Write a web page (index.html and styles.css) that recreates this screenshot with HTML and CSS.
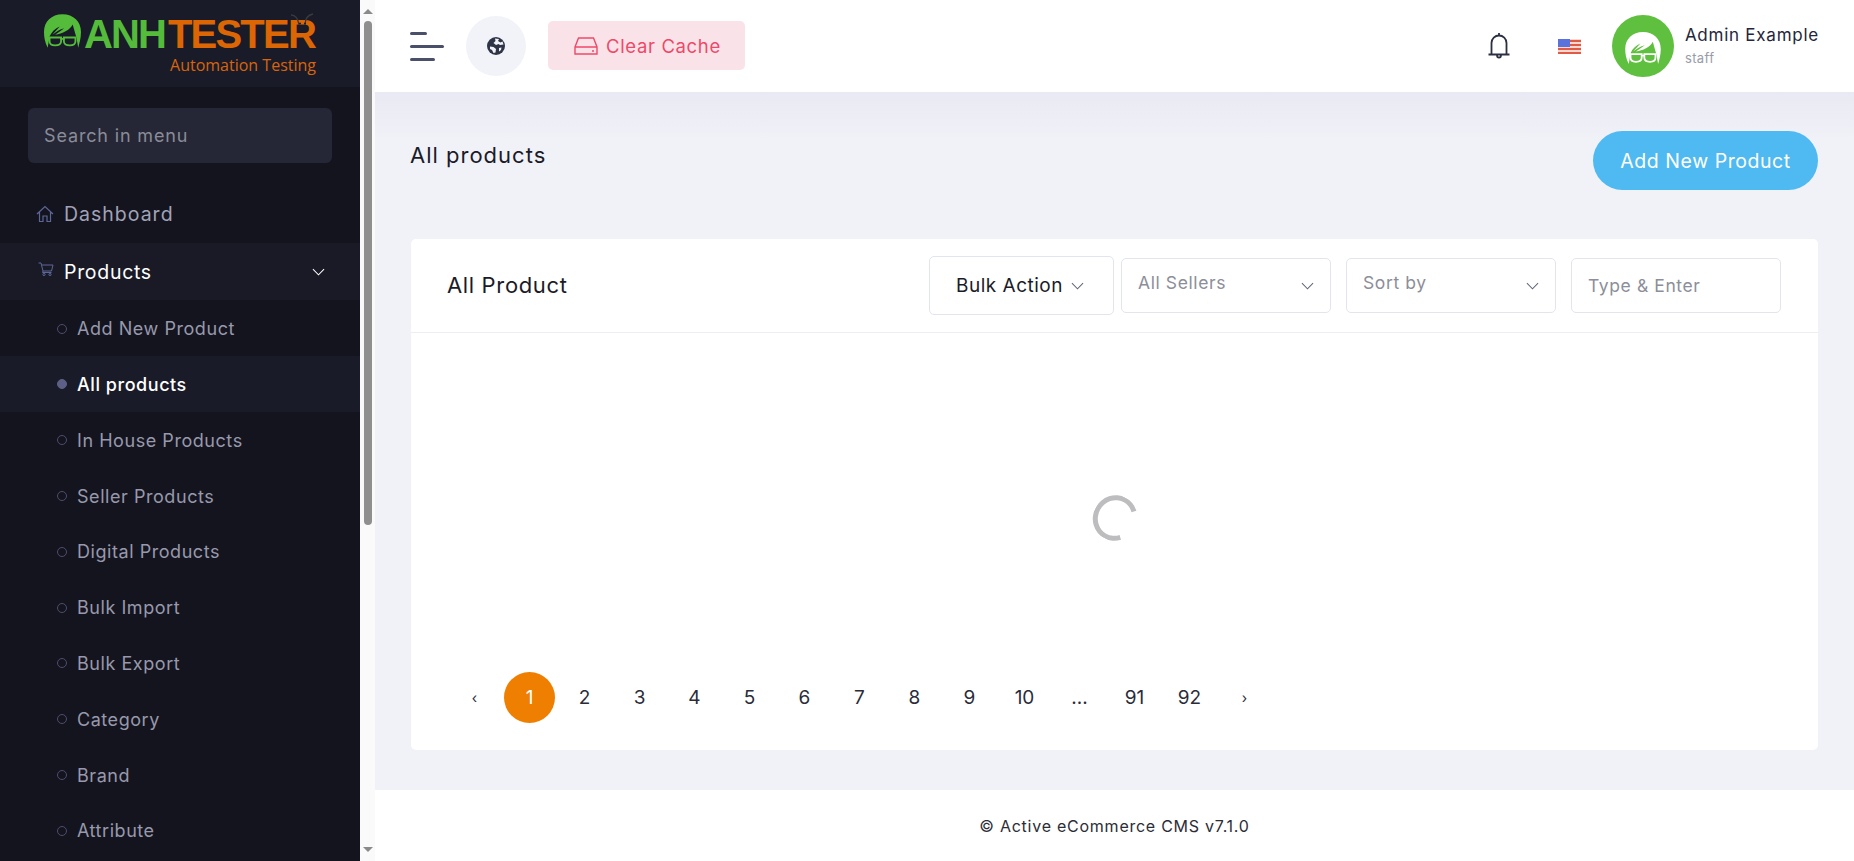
FILE: index.html
```html
<!DOCTYPE html>
<html lang="en">
<head>
    <meta charset="UTF-8">
    <title>All products</title>
    <link rel="stylesheet" href="styles.css">
</head>
<body>
    <svg class="defs" width="0" height="0">
        <symbol id="head" viewBox="0 0 40 36">
            <path fill="currentColor" d="M20 0C32 0 40 8 40 19C40 26 38 32 37 36L35 25L31 11C28 17 20 21 12 22L22 15C17 16 13 19 9 22L17 13C12 15 8 19 6 24L4 36C1 30 0 25 0 19C0 8 8 0 20 0Z"/>
            <g fill="none" stroke="currentColor" stroke-width="2">
                <path d="M6 25H18.500V29C18.500 32 16.500 33.500 12 33.500C8 33.500 6 32 6 29Z"/>
                <path d="M21.500 25H34V29C34 32 32 33.500 28 33.500C23.500 33.500 21.500 32 21.500 29Z"/>
                <path d="M18 26.500H22"/>
            </g>
        </symbol>
        <symbol id="chev" viewBox="0 0 14 8">
            <path fill="none" stroke="currentColor" stroke-width="1.1" d="M1 1L7 7L13 1"/>
        </symbol>
    </svg>

    <div class="app">
        <aside class="sidebar">
            <div class="side-inner">
                <div class="logo">
                    <svg class="logo-head"><use href="#head"/></svg>
                    <div class="logo-words">
                        <div class="logo-name"><span class="anh">ANH</span><span class="tester">TESTER</span></div>
                        <div class="logo-sub">Automation Testing</div>
                    </div>
                    <svg class="logo-bug" viewBox="0 0 24 14">
                        <path fill="none" stroke="#3a3a3f" stroke-width="1.3" d="M9 13C8 6 5 3 1 3M15 13C15 6 18 3 23 2"/>
                        <circle cx="10" cy="11.500" r="1" fill="#1a1b28"/>
                        <circle cx="15" cy="11.500" r="1" fill="#1a1b28"/>
                    </svg>
                </div>
                <div class="search-wrap">
                    <div class="search">Search in menu</div>
                </div>
                <nav class="menu">
                    <a class="menu-item">
                        <svg class="menu-icon" viewBox="0 0 18 18"><path fill="none" stroke="#5d6796" stroke-width="1.2" d="M1 9L9 1.500L17 9M3.500 7V16.500H7V11H11V16.500H14.500V7"/></svg>
                        Dashboard
                    </a>
                    <a class="menu-item open">
                        <svg class="menu-icon cart" viewBox="0 0 16 14"><path fill="none" stroke="#5d6796" stroke-width="1" d="M0.500 1H3L5 9H13.500L15 3H3.500M5 9L4.500 10.500H13.500"/><circle cx="6" cy="12.500" r="1.100" fill="none" stroke="#5d6796"/><circle cx="12" cy="12.500" r="1.100" fill="none" stroke="#5d6796"/></svg>
                        Products
                        <svg class="menu-chev"><use href="#chev"/></svg>
                    </a>
                    <a class="sub-item">Add New Product</a>
                    <a class="sub-item active">All products</a>
                    <a class="sub-item">In House Products</a>
                    <a class="sub-item">Seller Products</a>
                    <a class="sub-item">Digital Products</a>
                    <a class="sub-item">Bulk Import</a>
                    <a class="sub-item">Bulk Export</a>
                    <a class="sub-item">Category</a>
                    <a class="sub-item">Brand</a>
                    <a class="sub-item">Attribute</a>
                </nav>
            </div>
            <div class="side-scroll">
                <span class="arrow-up"></span>
                <span class="thumb"></span>
                <span class="arrow-down"></span>
            </div>
        </aside>

        <div class="main">
            <header class="topbar">
                <div class="burger"><span class="b1"></span><span class="b2"></span><span class="b3"></span></div>
                <div class="globe">
                    <svg viewBox="0 0 18 18" width="18" height="18">
                        <circle cx="9" cy="9" r="9" fill="#2f3547"/>
                        <path fill="#f2f3f8" d="M8 1.500L12 2L11 4L13.500 5.500L15.500 4.500L16.500 7.500L13 8L11.500 7L9 8L6.500 6L8.500 4ZM3 9.500L6.500 10L9 12L8.500 15.500L6.500 16L5 13L3 12ZM12 11L14.500 10.500L14 13L12 14.500Z"/>
                    </svg>
                </div>
                <button class="cache-btn">
                    <svg viewBox="0 0 24 18" width="24" height="18"><path fill="none" stroke="#ef486a" stroke-width="1.400" d="M1 10L4.500 1H19.500L23 10V17H1ZM1 10H23"/><circle cx="19" cy="14" r="1" fill="#ef486a"/></svg>
                    Clear Cache
                </button>
                <div class="top-right">
                    <svg class="bell" viewBox="0 0 24 28"><path fill="none" stroke="#2b3041" stroke-width="1.800" d="M1.500 22.500H22.500M4.500 22.500V11C4.500 6.500 8 3.500 12 3.500C16 3.500 19.500 6.500 19.500 11V22.500M12 1V3.500M10 23C10 26.500 14 26.500 14 23"/></svg>
                    <svg class="flag" viewBox="0 0 23 15">
                        <rect width="23" height="15" fill="#f3d9d4"/>
                        <path d="M0 1H23V3H0ZM0 5H23V7H0ZM0 9H23V11H0ZM0 13H23V15H0Z" fill="#e05a44"/>
                        <rect width="12" height="8" fill="#5a72dc"/>
                    </svg>
                    <div class="avatar"><svg><use href="#head"/></svg></div>
                    <div class="user">
                        <div class="user-name">Admin Example</div>
                        <div class="user-role">staff</div>
                    </div>
                </div>
            </header>

            <main class="content">
                <div class="page-head">
                    <h1>All products</h1>
                    <button class="add-btn">Add New Product</button>
                </div>

                <section class="card">
                    <div class="card-head">
                        <h2>All Product</h2>
                        <div class="bulk">Bulk Action <svg class="chev"><use href="#chev"/></svg></div>
                        <div class="field select"><span>All Sellers</span><svg class="chev"><use href="#chev"/></svg></div>
                        <div class="field select"><span>Sort by</span><svg class="chev"><use href="#chev"/></svg></div>
                        <div class="field">Type &amp; Enter</div>
                    </div>
                    <div class="card-body">
                        <div class="spinner"></div>
                    </div>
                    <div class="pager">
                        <span class="page small">‹</span>
                        <span class="page current">1</span>
                        <span class="page">2</span>
                        <span class="page">3</span>
                        <span class="page">4</span>
                        <span class="page">5</span>
                        <span class="page">6</span>
                        <span class="page">7</span>
                        <span class="page">8</span>
                        <span class="page">9</span>
                        <span class="page">10</span>
                        <span class="page">...</span>
                        <span class="page">91</span>
                        <span class="page">92</span>
                        <span class="page small">›</span>
                    </div>
                </section>
            </main>

            <footer class="footer">© Active eCommerce CMS v7.1.0</footer>
        </div>
    </div>
</body>
</html>
```

FILE: styles.css
```css
* {
    box-sizing: border-box;
}
html, body {
    margin: 0;
    height: 100%;
    overflow: hidden;
}
body {
    font-family: Inter, "Noto Sans", sans-serif;
    color: #1b1b28;
    background-color: #f1f2f8;
}
.defs {
    display: block;
    height: 0;
}
.app {
    display: flex;
    height: 861px;
}

/* sidebar */
.sidebar {
    display: flex;
    width: 375px;
    flex-shrink: 0;
}
.side-inner {
    width: 360px;
    background-color: #14141f;
    overflow: hidden;
}
.side-scroll {
    width: 15px;
    background-color: #fafafa;
    display: flex;
    flex-direction: column;
    align-items: center;
    padding: 9px 0 9px;
}
.thumb {
    width: 8px;
    height: 504px;
    margin-top: 7px;
    background-color: #8f8f8f;
    border-radius: 4px;
}
.arrow-up, .arrow-down {
    width: 0;
    height: 0;
    border-left: 5px solid transparent;
    border-right: 5px solid transparent;
}
.arrow-up {
    border-bottom: 5px solid #8a8a8a;
}
.arrow-down {
    border-top: 5px solid #8a8a8a;
    margin-top: auto;
}
.logo {
    position: relative;
    height: 87px;
    background-color: #1a1b28;
    display: flex;
    padding: 14px 0 0 44px;
}
.logo-head {
    width: 37px;
    height: 34px;
    color: #54bb3b;
    margin-right: 3px;
}
.logo-words {
    width: 232px;
}
.logo-name {
    font-family: "Liberation Sans", sans-serif;
    font-size: 40px;
    font-weight: 700;
    line-height: 40px;
    white-space: nowrap;
}
.anh {
    color: #54bb3b;
    letter-spacing: -1.900px;
}
.tester {
    color: #dc6603;
    letter-spacing: -1.800px;
    margin-left: 3px;
}
.logo-sub {
    font-family: "Open Sans", sans-serif;
    font-size: 16px;
    line-height: 22px;
    color: #d7650f;
    text-align: right;
    white-space: nowrap;
}
.logo-bug {
    position: absolute;
    left: 290px;
    top: 12px;
    width: 24px;
    height: 14px;
}
.search-wrap {
    padding: 21px 28px 23px;
}
.search {
    height: 55px;
    line-height: 55px;
    padding-left: 16px;
    font-size: 18px;
    letter-spacing: 0.850px;
    color: #8a8c98;
    background-color: #252736;
    border-radius: 6px;
}
.menu-item {
    display: flex;
    align-items: center;
    height: 57px;
    padding-left: 36px;
    font-size: 19.500px;
    letter-spacing: 1px;
    color: #a2a3b7;
}
.menu-item:first-child {
    padding-bottom: 2px;
}
.menu-icon {
    width: 18px;
    height: 18px;
    margin-right: 10px;
}
.menu-icon.cart {
    width: 16px;
    height: 14px;
    margin: -5px 10px 0 2px;
}
.menu-item.open {
    color: #fff;
    background-color: #191a26;
    letter-spacing: 0.700px;
}
.menu-chev {
    width: 13px;
    height: 8px;
    margin-left: auto;
    margin-right: 35px;
    color: #fff;
}
.sub-item {
    display: flex;
    align-items: center;
    height: 55.800px;
    padding: 1.500px 0 0 57px;
    font-size: 18px;
    letter-spacing: 0.550px;
    color: #9899ac;
}
.sub-item::before {
    content: "";
    width: 8px;
    height: 8px;
    margin-right: 10px;
    border: 1.500px solid #4c4e6f;
    border-radius: 50%;
}
.sub-item.active {
    color: #fff;
    background-color: #1a1b28;
    font-weight: 500;
}
.sub-item.active::before {
    background-color: #5e5f86;
    border-color: #5e5f86;
}

/* top bar */
.main {
    flex: 1;
    min-width: 0;
    display: flex;
    flex-direction: column;
}
.topbar {
    height: 92px;
    flex-shrink: 0;
    background-color: #fff;
    display: flex;
    align-items: center;
    padding: 0 35px;
}
.burger {
    display: flex;
    flex-direction: column;
    gap: 10px;
    width: 35px;
    margin-right: 21px;
}
.burger span {
    height: 3px;
    background-color: #4a4f6a;
    border-radius: 2px;
}
.burger .b1 {
    width: 17px;
}
.burger .b2 {
    width: 34px;
}
.burger .b3 {
    width: 25px;
}
.globe {
    width: 60px;
    height: 60px;
    border-radius: 50%;
    background-color: #f2f3f8;
    display: flex;
    align-items: center;
    justify-content: center;
    margin-right: 22px;
}
.cache-btn {
    display: flex;
    align-items: center;
    gap: 8px;
    width: 197px;
    height: 49px;
    margin-top: -1px;
    padding: 0 0 0 26px;
    border: none;
    border-radius: 5px;
    background-color: #fae3e8;
    color: #ef486a;
    font-family: inherit;
    font-size: 18.500px;
    letter-spacing: 0.650px;
}
.top-right {
    margin-left: auto;
    display: flex;
    align-items: center;
}
.bell {
    width: 24px;
    height: 28px;
    margin-right: 47px;
}
.flag {
    width: 23px;
    height: 15px;
    margin-right: 31px;
}
.avatar {
    width: 62px;
    height: 62px;
    border-radius: 50%;
    background-color: #5fbf3e;
    color: #fff;
    padding: 17px 10px 13px;
    margin-right: 11px;
}
.avatar svg {
    width: 42px;
    height: 32px;
    display: block;
}
.user-name {
    font-size: 17px;
    letter-spacing: 0.750px;
    color: #23263a;
    line-height: 22px;
}
.user-role {
    font-size: 13px;
    letter-spacing: 0.400px;
    color: #999ca8;
    line-height: 20px;
    margin-top: 2px;
}

/* content */
.content {
    flex: 1;
    padding: 39px 36px 40px;
    background: linear-gradient(#e8e9f2, #f1f2f8 48px);
    display: flex;
    flex-direction: column;
}
.page-head {
    display: flex;
    justify-content: space-between;
    align-items: flex-start;
    height: 108px;
}
h1 {
    margin: 10px 0 0 -1px;
    font-size: 22px;
    letter-spacing: 1px;
    font-weight: 400;
    line-height: 28px;
}
.add-btn {
    width: 225px;
    height: 59px;
    border: none;
    border-radius: 30px;
    background-color: #4fb9f2;
    color: #fff;
    font-family: inherit;
    font-size: 19.500px;
    letter-spacing: 0.550px;
}
.card {
    height: 511px;
    background-color: #fff;
    border-radius: 5px;
    display: flex;
    flex-direction: column;
}
.card-head {
    height: 94px;
    flex-shrink: 0;
    display: flex;
    align-items: center;
    gap: 15px;
    padding: 0 37px 0 36px;
    border-bottom: 1px solid #eceef4;
}
h2 {
    margin: -2px auto 0 0;
    font-size: 22px;
    letter-spacing: 0.650px;
    font-weight: 400;
}
.bulk {
    display: flex;
    align-items: center;
    gap: 8px;
    width: 185px;
    height: 59px;
    margin-right: -8px;
    padding-left: 26px;
    border: 1px solid #e3e5ee;
    border-radius: 5px;
    font-size: 19px;
    letter-spacing: 0.500px;
}
.field {
    display: flex;
    align-items: center;
    justify-content: space-between;
    width: 210px;
    height: 55px;
    padding: 0 16px 0 16px;
    border: 1px solid #e3e5ee;
    border-radius: 5px;
    font-size: 17.500px;
    letter-spacing: 0.600px;
    color: #8c8e99;
}
.field.select span {
    margin-top: -6px;
}
.chev {
    width: 13px;
    height: 8px;
    color: #60647a;
}
.card-body {
    flex: 1;
    display: flex;
    justify-content: center;
    align-items: center;
    padding-top: 30px;
}
.spinner {
    width: 44px;
    height: 46px;
    border: 5px solid #bdbdc0;
    border-right-color: transparent;
    border-radius: 50%;
    transform: rotate(28deg);
}
.pager {
    display: flex;
    align-items: center;
    height: 51px;
    margin-bottom: 27px;
    padding-left: 38px;
}
.page {
    width: 51px;
    height: 51px;
    margin-right: 4px;
    display: flex;
    align-items: center;
    justify-content: center;
    border-radius: 50%;
    font-size: 19px;
    color: #2a2c3a;
}
.page.small {
    font-size: 14px;
}
.page.current {
    background-color: #ef7f00;
    color: #fff;
}
.footer {
    height: 71px;
    flex-shrink: 0;
    display: flex;
    align-items: center;
    justify-content: center;
    background-color: #fff;
    font-size: 16px;
    letter-spacing: 0.750px;
    color: #2c2d36;
}
```
